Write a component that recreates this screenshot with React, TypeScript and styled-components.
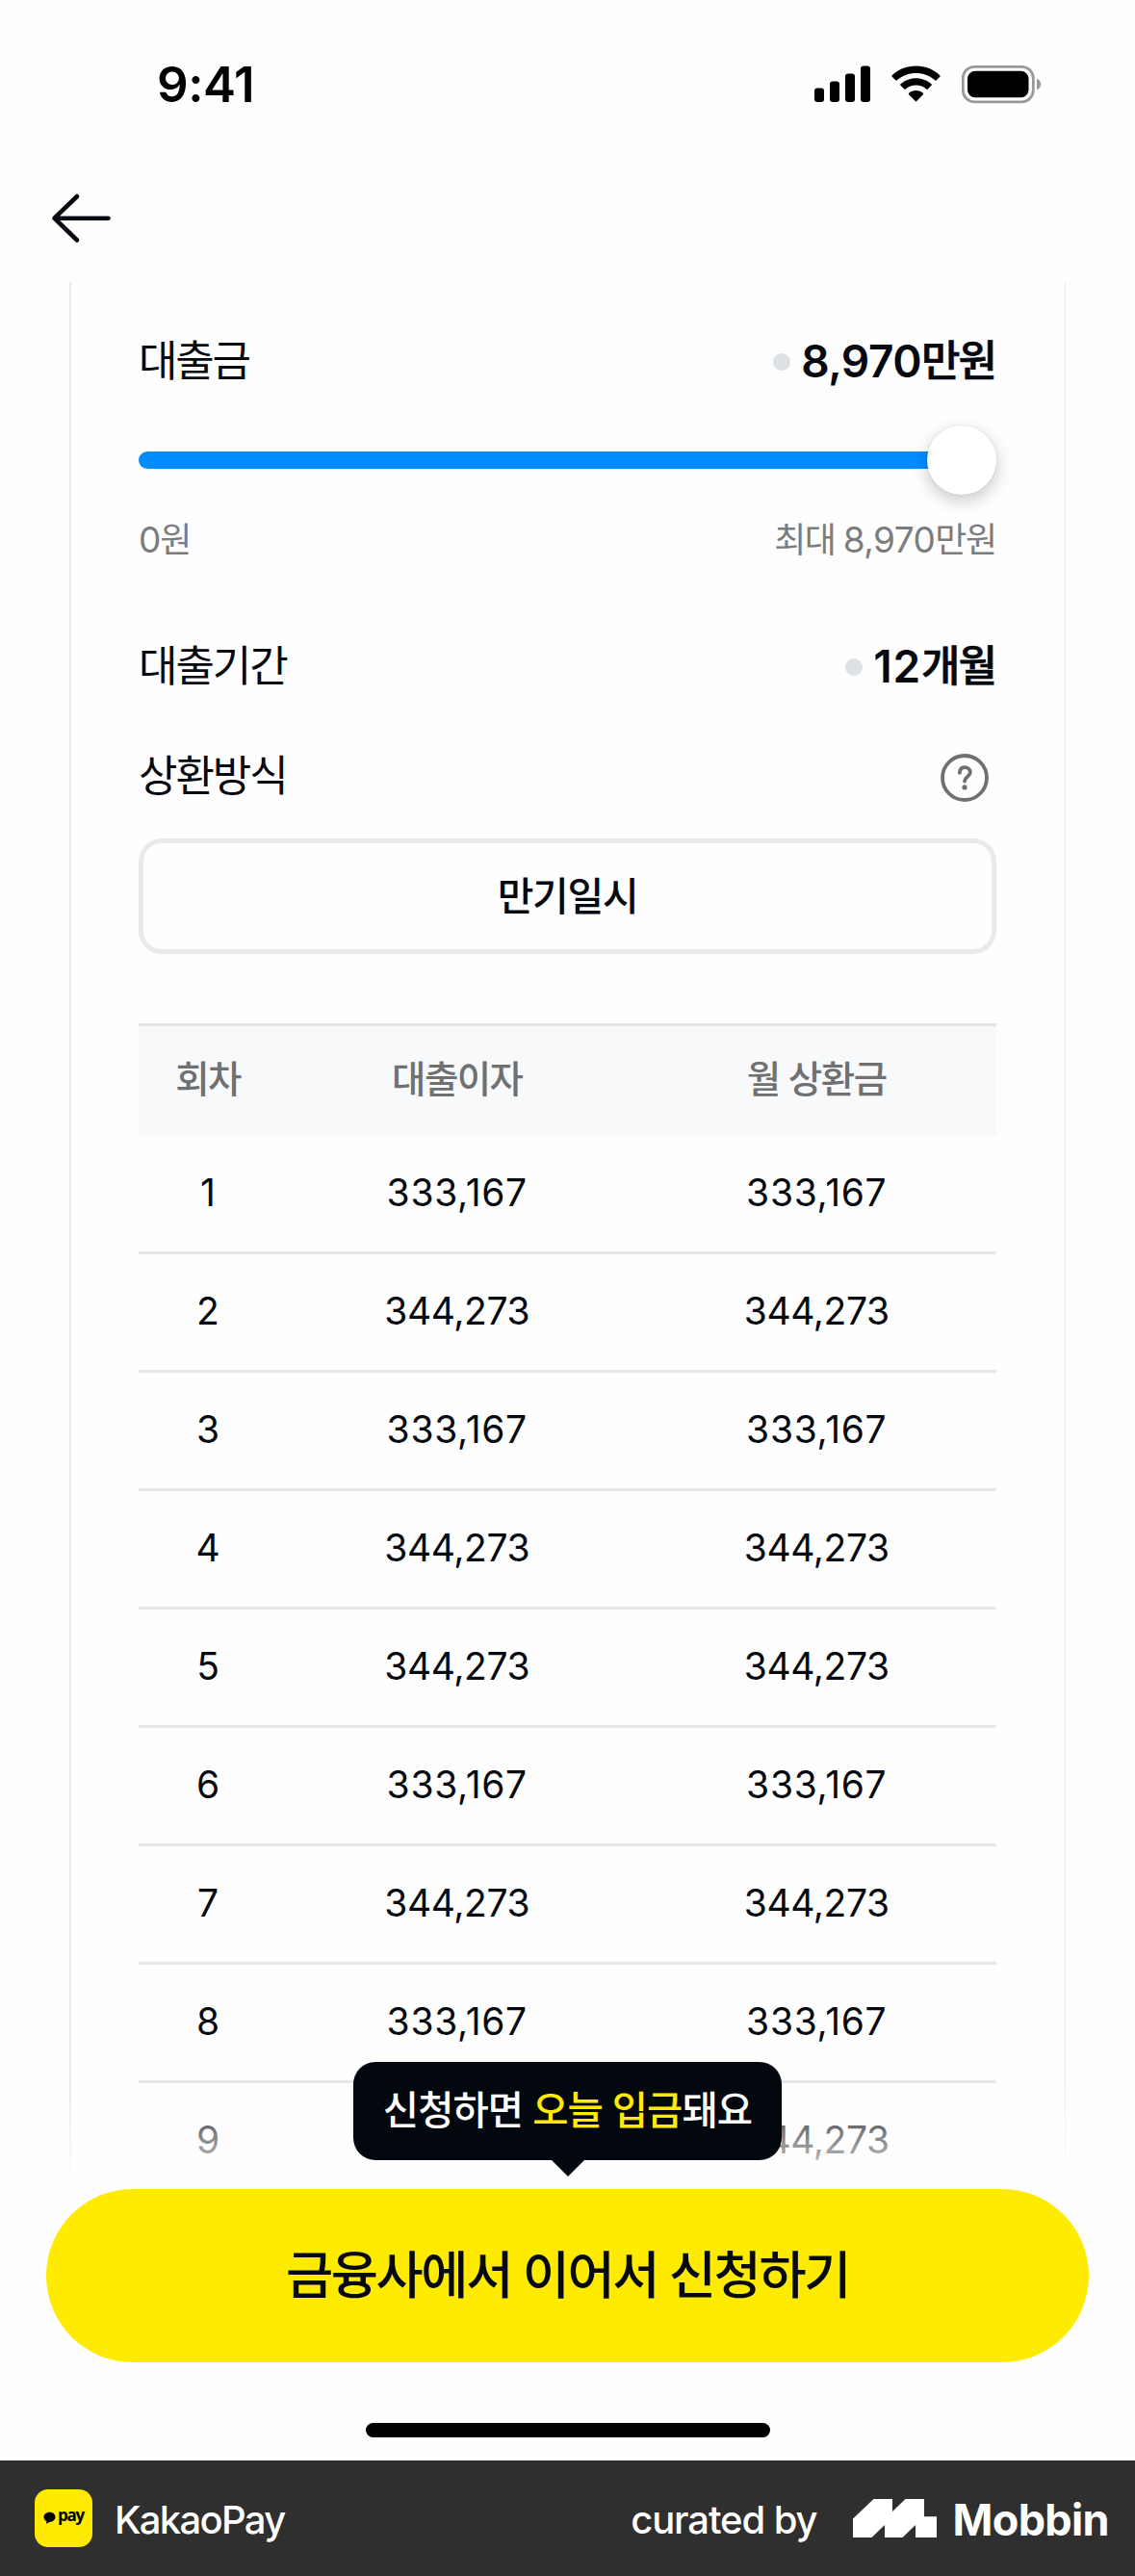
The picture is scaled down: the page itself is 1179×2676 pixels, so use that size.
import React from 'react';
import styled, { createGlobalStyle } from 'styled-components';

const GlobalStyle = createGlobalStyle`
  * { box-sizing: border-box; }
  body { margin: 0; background: #fefefe; }
`;

const FONT = `Inter, 'Noto Sans CJK KR', sans-serif`;

const Screen = styled.div`
  position: relative;
  width: 1179px;
  height: 2676px;
  display: flex;
  flex-direction: column;
  overflow: hidden;
  background: #fefefe;
  color: #06090f;
  font-family: ${FONT};
`;

const StatusBar = styled.header`
  height: 177px;
  padding: 2px 97px 0 163px;
  display: flex;
  align-items: flex-start;
  justify-content: space-between;
  color: #000;
`;

const Clock = styled.time`
  margin-top: 56px;
  font-size: 51px;
  line-height: 60px;
  font-weight: 600;
  letter-spacing: -0.4px;
`;

const StatusIcons = styled.svg`
  margin-top: 64px;
  width: 236px;
  height: 42px;
`;

const NavBar = styled.nav`
  height: 116px;
  padding: 22px 0 0 52px;
`;

const BackIcon = styled.svg`
  display: block;
  width: 66px;
  height: 56px;
`;

const Card = styled.main`
  height: 1963px;
  margin: 0 72px 0 72px;
  padding: 0 71px 0 70px;
  border-left: 2px solid #e9ebeb;
  border-right: 1px solid #e9ebee;
  display: flex;
  flex-direction: column;
  overflow: hidden;
`;

const Field = styled.div<{ $top: number }>`
  margin-top: ${(p) => p.$top}px;
  height: 60px;
  flex: none;
  display: flex;
  align-items: center;
  justify-content: space-between;
`;

const Ko = styled.span<{ $size: number; $weight?: number; $track?: number; $color?: string }>`
  font-size: ${(p) => p.$size}px;
  line-height: 60px;
  font-weight: ${(p) => p.$weight ?? 400};
  letter-spacing: ${(p) => p.$track ?? 0}px;
  color: ${(p) => p.$color ?? 'inherit'};
  white-space: pre;
`;

const StrongKo = styled(Ko)`
  -webkit-text-stroke: 0.7px currentColor;
  margin-right: 1px;
`;

const Value = styled.div`
  display: flex;
  align-items: center;
`;

const Bullet = styled.i`
  width: 18px;
  height: 18px;
  margin: 2px 11px 0 0;
  border-radius: 50%;
  background: #dce1e5;
`;

const Slider = styled.div`
  flex: none;
  height: 72px;
  margin-top: 37px;
  display: flex;
  align-items: center;
`;

const Track = styled.div`
  flex: 1;
  height: 18px;
  margin-right: -36px;
  border-radius: 9px;
  background: #008cff;
`;

const Thumb = styled.div`
  position: relative;
  width: 72px;
  height: 72px;
  border-radius: 50%;
  background: #fff;
  box-shadow: 0 6px 18px rgba(0, 0, 0, 0.22), 0 0 3px rgba(0, 0, 0, 0.08);
`;

const HelpIcon = styled.svg`
  width: 50px;
  height: 50px;
  margin: 3px 8px 0 0;
`;

const Method = styled.button`
  flex: none;
  height: 120px;
  margin: 35px 0 0;
  padding: 0;
  border: 5px solid #e8eaeb;
  border-radius: 24px;
  background: transparent;
  color: inherit;
  font-family: inherit;
`;

const Grid = styled.div`
  display: grid;
  grid-template-columns: 144px 1fr 1fr;
  align-items: center;
  justify-items: center;
`;

const HeadRow = styled(Grid)`
  flex: none;
  height: 117px;
  margin-top: 72px;
  padding-bottom: 4px;
  border-top: 3px solid #e3e5e5;
  background: #f8f9fb;
  color: #6f7072;
`;

const Row = styled(Grid)`
  flex: none;
  height: 123px;
  padding-bottom: 2px;
  border-bottom: 3px solid #e6e7e8;
  font-size: 39px;
  line-height: 60px;
`;

const Amount = styled.span<{ $track: number }>`
  letter-spacing: ${(p) => p.$track}px;
`;

const ActionArea = styled.footer`
  position: relative;
  height: 300px;
  flex: none;
  padding: 18px 48px 0;
  display: flex;
  flex-direction: column;
  align-items: center;
`;

const Fade = styled.div`
  position: absolute;
  left: 0;
  right: 0;
  top: -96px;
  height: 96px;
  background: linear-gradient(rgba(254, 254, 254, 0), rgba(254, 254, 254, 0.8));
`;

const Tooltip = styled.div`
  position: absolute;
  top: -114px;
  left: 367px;
  width: 445px;
  height: 102px;
  border-radius: 23px;
  background: #03080f;
  color: #fff;
  display: flex;
  justify-content: center;
  align-items: center;
`;

const Tail = styled.i`
  position: absolute;
  top: 100%;
  left: 206px;
  border: solid transparent;
  border-width: 17px 17px 0;
  border-top-color: #03080f;
`;

const Submit = styled.button`
  width: 1083px;
  height: 180px;
  flex: none;
  padding: 0;
  border: 0;
  border-radius: 90px;
  background: #ffeb00;
  color: #06090f;
  font-family: inherit;
`;

const HomeIndicator = styled.div`
  width: 420px;
  height: 15px;
  margin-top: 63px;
  border-radius: 8px;
  background: #000;
`;

const Credit = styled.div`
  height: 120px;
  flex: none;
  padding: 0 27px 0 36px;
  display: flex;
  align-items: center;
  background: #2f2f2f;
  color: #fff;
`;

const AppIcon = styled.div`
  width: 60px;
  height: 60px;
  border-radius: 14px;
  background: #ffeb00;
  color: #000;
  display: flex;
  align-items: center;
  padding: 0 0 2px 9px;
  gap: 2px;
`;

const Bubble = styled.svg`
  width: 13px;
  height: 13px;
  flex: none;
`;

const Pay = styled.span`
  font: 700 17px/20px 'Open Sans', sans-serif;
  letter-spacing: -1.3px;
  margin-top: -5px;
`;

const CreditText = styled.span<{ $size: number; $weight: number; $track: number; $left?: number }>`
  font-size: ${(p) => p.$size}px;
  line-height: 50px;
  font-weight: ${(p) => p.$weight};
  letter-spacing: ${(p) => p.$track}px;
  margin-left: ${(p) => p.$left ?? 0}px;
  padding-top: 3px;
  white-space: nowrap;
`;

const MobbinMark = styled.svg`
  width: 87px;
  height: 40px;
  margin-left: 38px;
`;

const Spacer = styled.div`
  flex: 1;
`;

const A = '333,167';
const B = '344,273';
const PAYMENTS = [A, B, A, B, B, A, B, A, B];
const TRACKS: Record<string, number> = { [A]: 0.7, [B]: -0.4 };

export default function App() {
  return (
    <>
      <GlobalStyle />
      <Screen>
        <StatusBar>
          <Clock>9:41</Clock>
          <StatusIcons viewBox="0 0 236 42">
            <rect x="0" y="25.5" width="10" height="14.5" rx="3" />
            <rect x="16" y="18.5" width="10" height="21.5" rx="3" />
            <rect x="32" y="10.5" width="10" height="29.5" rx="3" />
            <rect x="48" y="2.5" width="10" height="37.5" rx="3" />
            <path d="M105.500 2.500C115.500 2.500 124 6.200 130.300 12.200Q131 13 130.300 13.700L126.700 17.300Q126 18 125.200 17.300C120 12.500 113 9.900 105.500 9.900S91 12.500 85.800 17.300Q85 18 84.300 17.300L80.700 13.700Q80 13 80.700 12.200C87 6.200 95.500 2.500 105.500 2.500Z" />
            <path d="M105.500 15.200C111.700 15.200 117.300 17.500 121.500 21.300Q122.300 22 121.500 22.800L117.800 26.500Q117 27.200 116.200 26.500C113.300 24 109.600 22.600 105.500 22.600S97.700 24 94.800 26.500Q94 27.200 93.200 26.500L89.500 22.800Q88.700 22 89.500 21.300C93.700 17.500 99.300 15.200 105.500 15.200Z" />
            <path d="M105.500 28C108.300 28 110.900 29 112.900 30.800Q113.600 31.500 112.900 32.200L106.200 38.900Q105.500 39.600 104.800 38.900L98.100 32.200Q97.400 31.500 98.100 30.800C100.100 29 102.700 28 105.500 28Z" />
            <rect x="154.300" y="3.300" width="73" height="36.500" rx="12" fill="none" stroke="#999" strokeWidth="2.800" />
            <rect x="159" y="7.800" width="63.500" height="27.500" rx="8" />
            <path d="M231 15.500C236.500 18 236.500 25 231 27.500Z" fill="#999" />
          </StatusIcons>
        </StatusBar>

        <NavBar>
          <BackIcon viewBox="0 0 66 56" fill="none" stroke="#06090f" strokeWidth="4.600" strokeLinecap="round" strokeLinejoin="round">
            <path d="M60.500 27.700H4.500M28 5L4.500 27.700L28 50.500" />
          </BackIcon>
        </NavBar>

        <Card>
          <Field $top={52}>
            <Ko $size={44} $track={-2.2}>대출금</Ko>
            <Value>
              <Bullet />
              <Ko $size={46} $weight={600} $track={-0.5}>8,970</Ko>
              <StrongKo $size={44} $weight={500} $track={-2}>만원</StrongKo>
            </Value>
          </Field>
          <Slider>
            <Track />
            <Thumb />
          </Slider>
          <Field $top={17}>
            <Value>
              <Ko $size={37} $track={-1.2} $color="#7b7c7e">0</Ko>
              <Ko $size={36} $track={-1.9} $color="#7b7c7e">원</Ko>
            </Value>
            <Value>
              <Ko $size={36} $track={-1.6} $color="#7b7c7e">최대 </Ko>
              <Ko $size={37} $track={-0.6} $color="#7b7c7e">8,970</Ko>
              <Ko $size={36} $track={-1.2} $color="#7b7c7e">만원</Ko>
            </Value>
          </Field>
          <Field $top={71}>
            <Ko $size={44} $track={-2.1}>대출기간</Ko>
            <Value>
              <Bullet />
              <Ko $size={46} $weight={600} $track={0.8}>12</Ko>
              <StrongKo $size={44} $weight={500} $track={-2}>개월</StrongKo>
            </Value>
          </Field>
          <Field $top={54}>
            <Ko $size={44} $track={-2.1}>상환방식</Ko>
            <HelpIcon viewBox="0 0 50 50" fill="none" stroke="#6f7072" strokeWidth="3.800" strokeLinecap="round">
              <circle cx="25" cy="25" r="23" />
              <path d="M19.800 19.800C20 16 22 14.200 25.200 14.200S30.800 16.300 30.800 19.500C30.800 23.500 25.300 24 25 28.500" />
              <circle cx="25" cy="34.900" r="2.600" fill="#6f7072" stroke="none" />
            </HelpIcon>
          </Field>
          <Method>
            <Ko $size={41} $weight={500} $track={-1.3}>만기일시</Ko>
          </Method>
          <HeadRow>
            <Ko $size={38.5} $weight={500} $track={-1.6}>회차</Ko>
            <Ko $size={38.5} $weight={500} $track={-1.6}>대출이자</Ko>
            <Ko $size={38.5} $weight={500} $track={-1.4}>월 상환금</Ko>
          </HeadRow>
          {PAYMENTS.map((amount, i) => (
            <Row key={i}>
              <span>{i + 1}</span>
              <Amount $track={TRACKS[amount]}>{amount}</Amount>
              <Amount $track={TRACKS[amount]}>{amount}</Amount>
            </Row>
          ))}
        </Card>

        <ActionArea>
          <Fade />
          <Tooltip>
            <Ko $size={40.5} $weight={500} $track={-0.9}>신청하면 </Ko>
            <Ko $size={40.5} $weight={500} $track={-0.9} $color="#ffeb00">오늘 입금</Ko>
            <Ko $size={40.5} $weight={500} $track={-0.9}>돼요</Ko>
            <Tail />
          </Tooltip>
          <Submit>
            <Ko $size={53.5} $weight={500} $track={-2.45}>금융사에서 이어서 신청하기</Ko>
          </Submit>
          <HomeIndicator />
        </ActionArea>

        <Credit>
          <AppIcon>
            <Bubble viewBox="0 0 13 13">
              <path d="M6.500 0.800C10 0.800 12.500 3 12.500 5.800S10 10.900 6.500 10.900L3 12.700L3.400 10.200C1.500 9.300 0.500 7.700 0.500 5.800C0.500 3 3 0.800 6.500 0.800Z" />
            </Bubble>
            <Pay>pay</Pay>
          </AppIcon>
          <CreditText $size={40} $weight={500} $track={-1.7} $left={23}>KakaoPay</CreditText>
          <Spacer />
          <CreditText $size={40} $weight={500} $track={-1.1}>curated by</CreditText>
          <MobbinMark viewBox="0 0 87 40" fill="#fff">
            <path d="M0 20.500L21.500 0H41V13L54.500 0H74V18.300H87V40H65V27L51.500 40H33V27L19.500 40H0Z" />
          </MobbinMark>
          <CreditText $size={45} $weight={700} $track={-0.65} $left={16}>Mobbin</CreditText>
        </Credit>
      </Screen>
    </>
  );
}
